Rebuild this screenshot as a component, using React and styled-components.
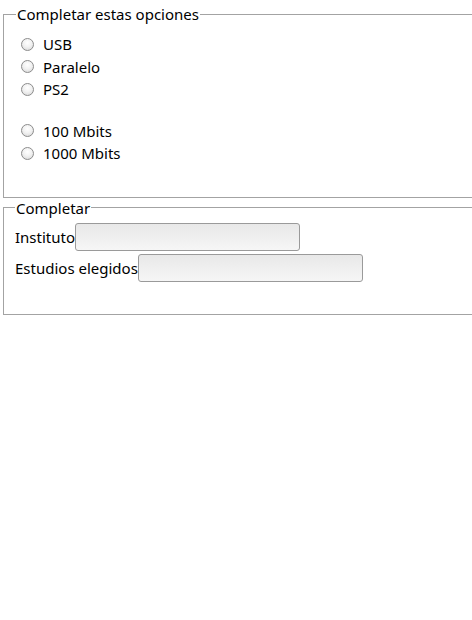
import styled, { createGlobalStyle } from 'styled-components';

const GlobalStyle = createGlobalStyle`
  html, body {
    margin: 0;
    padding: 0;
    background: #fff;
    overflow-x: hidden;
  }
  body {
    font-family: "Noto Sans", "Open Sans", sans-serif;
    font-size: 15px;
    color: #000;
  }
`;

const Page = styled.div`
  padding: 4px 0 0 3px;
  width: 520px;
`;

const Group = styled.fieldset`
  margin: 0;
  border: 1px solid #a3a3a3;
  padding: ${(p) => p.$pad};
  min-width: 0;
`;

const Legend = styled.legend`
  padding: 0 1px;
  margin-left: 0;
  line-height: 20px;
  font-size: 15px;
`;

const Options = styled.div`
  display: flex;
  flex-direction: column;
`;

const Option = styled.label`
  display: flex;
  align-items: center;
  height: 22.5px;
  gap: 9px;
  padding-left: 5px;
  margin-top: ${(p) => (p.$gap ? '19px' : '0')};
`;

const Radio = styled.span`
  width: 11px;
  height: 11px;
  border-radius: 50%;
  border: 1px solid #8c8c8c;
  background: radial-gradient(circle at 50% 35%, #ffffff 0%, #f2f2f2 45%, #d4d4d4 100%);
  flex: none;
`;

const Fields = styled.div`
  display: flex;
  flex-direction: column;
  gap: 4px;
`;

const Field = styled.label`
  display: flex;
  align-items: center;
  height: 27px;
`;

const Input = styled.span`
  display: block;
  width: 223px;
  height: 26px;
  border: 1px solid #9a9a9a;
  border-radius: 3px;
  background: linear-gradient(#e8e8e8, #f6f6f6);
`;

const radios = [
  ['USB'],
  ['Paralelo'],
  ['PS2'],
  ['100 Mbits', true],
  ['1000 Mbits'],
];

export default function App() {
  return (
    <Page>
      <GlobalStyle />
      <Group $pad="9px 12px 32px 12px">
        <Legend>Completar estas opciones</Legend>
        <Options>
          {radios.map(([text, gap]) => (
            <Option key={text} $gap={gap}>
              <Radio />
              {text}
            </Option>
          ))}
        </Options>
      </Group>
      <Group $pad="6px 11px 32px 11px">
        <Legend>Completar</Legend>
        <Fields>
          <Field>
            Instituto
            <Input />
          </Field>
          <Field>
            Estudios elegidos
            <Input />
          </Field>
        </Fields>
      </Group>
    </Page>
  );
}
